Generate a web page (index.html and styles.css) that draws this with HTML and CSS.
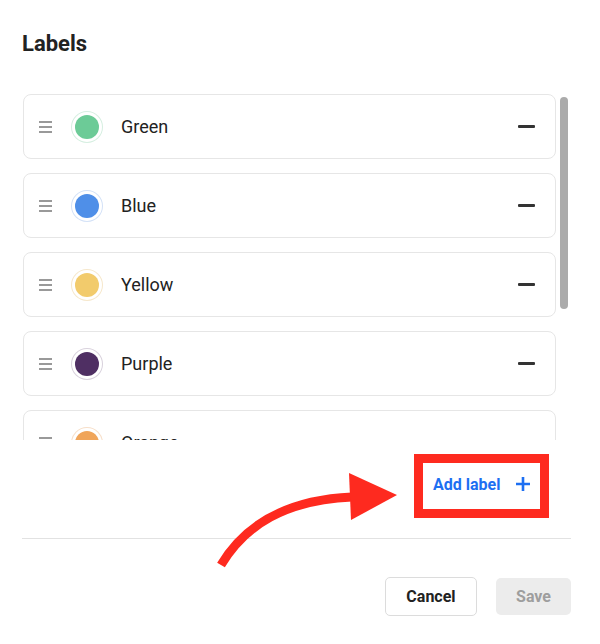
FILE: index.html
```html
<!DOCTYPE html>
<html lang="en">
<head>
<meta charset="utf-8">
<title>Labels</title>
<link rel="stylesheet" href="styles.css">
</head>
<body>
<div class="dialog">
  <h1 class="title">Labels</h1>
  <div class="list-area">
    <div class="list">
      <div class="card">
        <svg class="handle" width="13" height="12" viewBox="0 0 13 12"><rect x="0" y="0" width="13" height="2"/><rect x="0" y="5" width="13" height="2"/><rect x="0" y="10" width="13" height="2"/></svg>
        <span class="dot dot-green"></span>
        <span class="name">Green</span>
        <span class="minus"></span>
      </div>
      <div class="card">
        <svg class="handle" width="13" height="12" viewBox="0 0 13 12"><rect x="0" y="0" width="13" height="2"/><rect x="0" y="5" width="13" height="2"/><rect x="0" y="10" width="13" height="2"/></svg>
        <span class="dot dot-blue"></span>
        <span class="name">Blue</span>
        <span class="minus"></span>
      </div>
      <div class="card">
        <svg class="handle" width="13" height="12" viewBox="0 0 13 12"><rect x="0" y="0" width="13" height="2"/><rect x="0" y="5" width="13" height="2"/><rect x="0" y="10" width="13" height="2"/></svg>
        <span class="dot dot-yellow"></span>
        <span class="name">Yellow</span>
        <span class="minus"></span>
      </div>
      <div class="card">
        <svg class="handle" width="13" height="12" viewBox="0 0 13 12"><rect x="0" y="0" width="13" height="2"/><rect x="0" y="5" width="13" height="2"/><rect x="0" y="10" width="13" height="2"/></svg>
        <span class="dot dot-purple"></span>
        <span class="name">Purple</span>
        <span class="minus"></span>
      </div>
      <div class="card">
        <svg class="handle" width="13" height="12" viewBox="0 0 13 12"><rect x="0" y="0" width="13" height="2"/><rect x="0" y="5" width="13" height="2"/><rect x="0" y="10" width="13" height="2"/></svg>
        <span class="dot dot-orange"></span>
        <span class="name">Orange</span>
        <span class="minus"></span>
      </div>
    </div>
    <div class="scroll-track"><div class="thumb"></div></div>
  </div>
  <div class="add-row">
    <div class="highlight">
      <button class="add-btn" type="button">Add label
        <svg class="plus" width="16" height="16" viewBox="0 0 16 16"><path d="M8 1v14M1 8h14" stroke="currentColor" stroke-width="2.6" fill="none"/></svg>
      </button>
    </div>
  </div>
  <hr class="divider">
  <div class="actions">
    <button class="btn cancel" type="button">Cancel</button>
    <button class="btn save" type="button">Save</button>
  </div>
  <svg class="annotation-arrow" width="600" height="644" viewBox="0 0 600 644">
    <path d="M221 565 C 245 525, 285 500, 352 497" stroke="#fe2a1f" stroke-width="9" fill="none"/>
    <polygon points="349,473 397,495 351,520" fill="#fe2a1f"/>
  </svg>
</div>
</body>
</html>
```
FILE: styles.css
```css
body {
  margin: 0;
  background: #fff;
  font-family: Roboto, "Liberation Sans", sans-serif;
  color: #222;
}

.dialog {
  position: relative;
  width: 600px;
  height: 644px;
  box-sizing: border-box;
  padding: 32px 29px 0 22px;
  overflow: hidden;
}

.title {
  margin: 0;
  font-size: 22px;
  line-height: 24px;
  font-weight: 700;
  color: #222;
}

.list-area {
  display: flex;
  margin-top: 38px;
  height: 346px;
}

.list {
  width: 534px;
  box-sizing: border-box;
  padding-left: 1px;
  overflow: hidden;
  display: flex;
  flex-direction: column;
  gap: 14px;
}

.card {
  flex: none;
  height: 65px;
  box-sizing: border-box;
  border: 1px solid #e6e6e6;
  border-radius: 8px;
  display: flex;
  align-items: center;
  padding: 0 20px 0 15px;
}

.handle {
  flex: none;
  fill: #999;
  margin-right: 23px;
}

.dot {
  flex: none;
  width: 24px;
  height: 24px;
  border-radius: 50%;
  margin-right: 22px;
}

.dot-green { background: #6ccb97; box-shadow: 0 0 0 3px #fff, 0 0 0 4px #d6efe1; }
.dot-blue { background: #4f8fe8; box-shadow: 0 0 0 3px #fff, 0 0 0 4px #d4e2f7; }
.dot-yellow { background: #f2cb6c; box-shadow: 0 0 0 3px #fff, 0 0 0 4px #f6e8cc; }
.dot-purple { background: #4f2f63; box-shadow: 0 0 0 3px #fff, 0 0 0 4px #d9d2dd; }
.dot-orange { background: #f0a55a; box-shadow: 0 0 0 3px #fff, 0 0 0 4px #f7dfc9; }

.name {
  flex: 1;
  font-size: 18px;
  color: #222;
}

.minus {
  flex: none;
  width: 17px;
  height: 3px;
  border-radius: 1px;
  background: #333;
}

.scroll-track {
  width: 8px;
  margin-left: 4px;
  padding-top: 3px;
}

.thumb {
  height: 212px;
  border-radius: 4px;
  background: #ababab;
}

.add-row {
  display: flex;
  justify-content: flex-end;
  margin-top: 14px;
  margin-right: 22px;
}

.highlight {
  border: 9px solid #fe2a1f;
}

.add-btn {
  box-sizing: border-box;
  width: 117px;
  height: 46px;
  display: flex;
  align-items: center;
  gap: 15px;
  padding: 0 8px 4px 10px;
  border: 0;
  background: #fff;
  font-family: Roboto, "Liberation Sans", sans-serif;
  font-size: 16px;
  font-weight: 700;
  color: #1d6ff2;
  white-space: nowrap;
}

.plus {
  flex: none;
}

.divider {
  margin: 20px 0 0;
  border: 0;
  height: 1px;
  background: #e2e2e2;
}

.actions {
  display: flex;
  justify-content: flex-end;
  align-items: center;
  gap: 19px;
  margin-top: 38px;
}

.btn {
  box-sizing: border-box;
  border-radius: 5px;
  font-family: Roboto, "Liberation Sans", sans-serif;
  font-size: 16px;
  font-weight: 700;
}

.cancel {
  height: 39px;
  padding: 0 20.5px;
  border: 1px solid #dcdcdc;
  background: #fff;
  color: #222;
}

.save {
  height: 37px;
  padding: 0 20px;
  border: 0;
  background: #ececec;
  color: #9e9e9e;
}

.annotation-arrow {
  position: absolute;
  top: 0;
  left: 0;
  pointer-events: none;
}
```
